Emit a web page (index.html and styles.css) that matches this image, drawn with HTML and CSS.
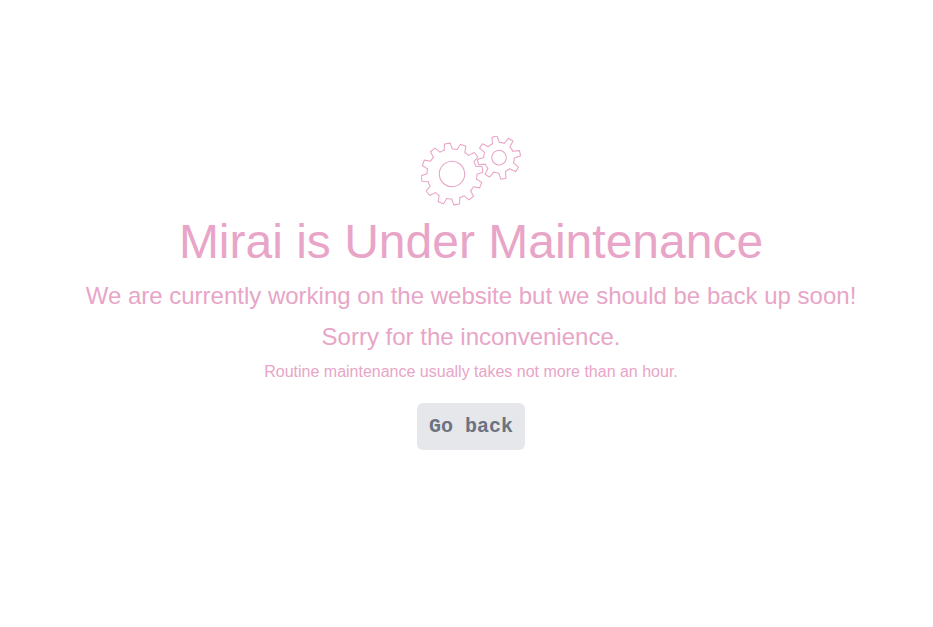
FILE: index.html
```html
<!DOCTYPE html>
<html lang="en">
<head>
<meta charset="utf-8">
<meta name="viewport" content="width=device-width, initial-scale=1">
<title>Mirai is Under Maintenance</title>
<link rel="stylesheet" href="styles.css">
</head>
<body>
<main class="notice">
  <svg class="gears" viewBox="33 18 300 210" aria-hidden="true">
    <defs>
      <path id="big" d="M-12.4-74L-8.6-92.4H8.6L12.4-74Q19-73 26.3-70.3"/>
      <path id="small" d="M-10.3-44.8L-7.9-64.5H7.9L10.3-44.8Q18-43 24.4-39"/>
    </defs>
    <g transform="translate(126 132) rotate(-8.7)">
      <circle r="38"/>
      <use href="#big"/>
      <use href="#big" transform="rotate(30)"/>
      <use href="#big" transform="rotate(60)"/>
      <use href="#big" transform="rotate(90)"/>
      <use href="#big" transform="rotate(120)"/>
      <use href="#big" transform="rotate(150)"/>
      <use href="#big" transform="rotate(180)"/>
      <use href="#big" transform="rotate(210)"/>
      <use href="#big" transform="rotate(240)"/>
      <use href="#big" transform="rotate(270)"/>
      <use href="#big" transform="rotate(300)"/>
      <use href="#big" transform="rotate(330)"/>
    </g>
    <g transform="translate(267 83) rotate(-12)">
      <circle r="22"/>
      <use href="#small"/>
      <use href="#small" transform="rotate(45)"/>
      <use href="#small" transform="rotate(90)"/>
      <use href="#small" transform="rotate(135)"/>
      <use href="#small" transform="rotate(180)"/>
      <use href="#small" transform="rotate(225)"/>
      <use href="#small" transform="rotate(270)"/>
      <use href="#small" transform="rotate(315)"/>
    </g>
  </svg>
  <h1 class="title">Mirai is Under Maintenance</h1>
  <p class="lead">We are currently working on the website but we should be back up soon!</p>
  <p class="lead">Sorry for the inconvenience.</p>
  <p class="note">Routine maintenance usually takes not more than an hour.</p>
  <button class="back" type="button">Go back</button>
</main>
</body>
</html>
```
FILE: styles.css
```css
* {
  box-sizing: border-box;
}

body {
  margin: 0;
  background: #fff;
  color: #e8a5c7;
  font-family: "Helvetica Neue", "Liberation Sans", Arial, sans-serif;
}

.notice {
  display: flex;
  flex-direction: column;
  align-items: center;
  justify-content: center;
  min-height: 100vh;
  padding: 0 0 41px 9px;
  text-align: center;
}

.gears {
  width: 100px;
  height: 70px;
  margin-bottom: 12px;
  fill: none;
  stroke: currentColor;
  stroke-width: 3.2;
  stroke-linejoin: round;
  stroke-linecap: round;
}

.title {
  margin: 0 0 14px;
  font-size: 48px;
  line-height: 48px;
  font-weight: 300;
}

.lead {
  margin: 0 0 9px;
  font-size: 24px;
  line-height: 32px;
  font-weight: 300;
}

.note {
  margin: 0 0 21px;
  font-size: 16px;
  line-height: 20px;
  font-weight: 300;
}

.back {
  padding: 12px;
  border: 0;
  border-radius: 6px;
  background: #e5e7eb;
  color: #6b7280;
  font-family: "Liberation Mono", monospace;
  font-size: 20px;
  line-height: 23px;
  font-weight: 700;
  cursor: pointer;
}
```
